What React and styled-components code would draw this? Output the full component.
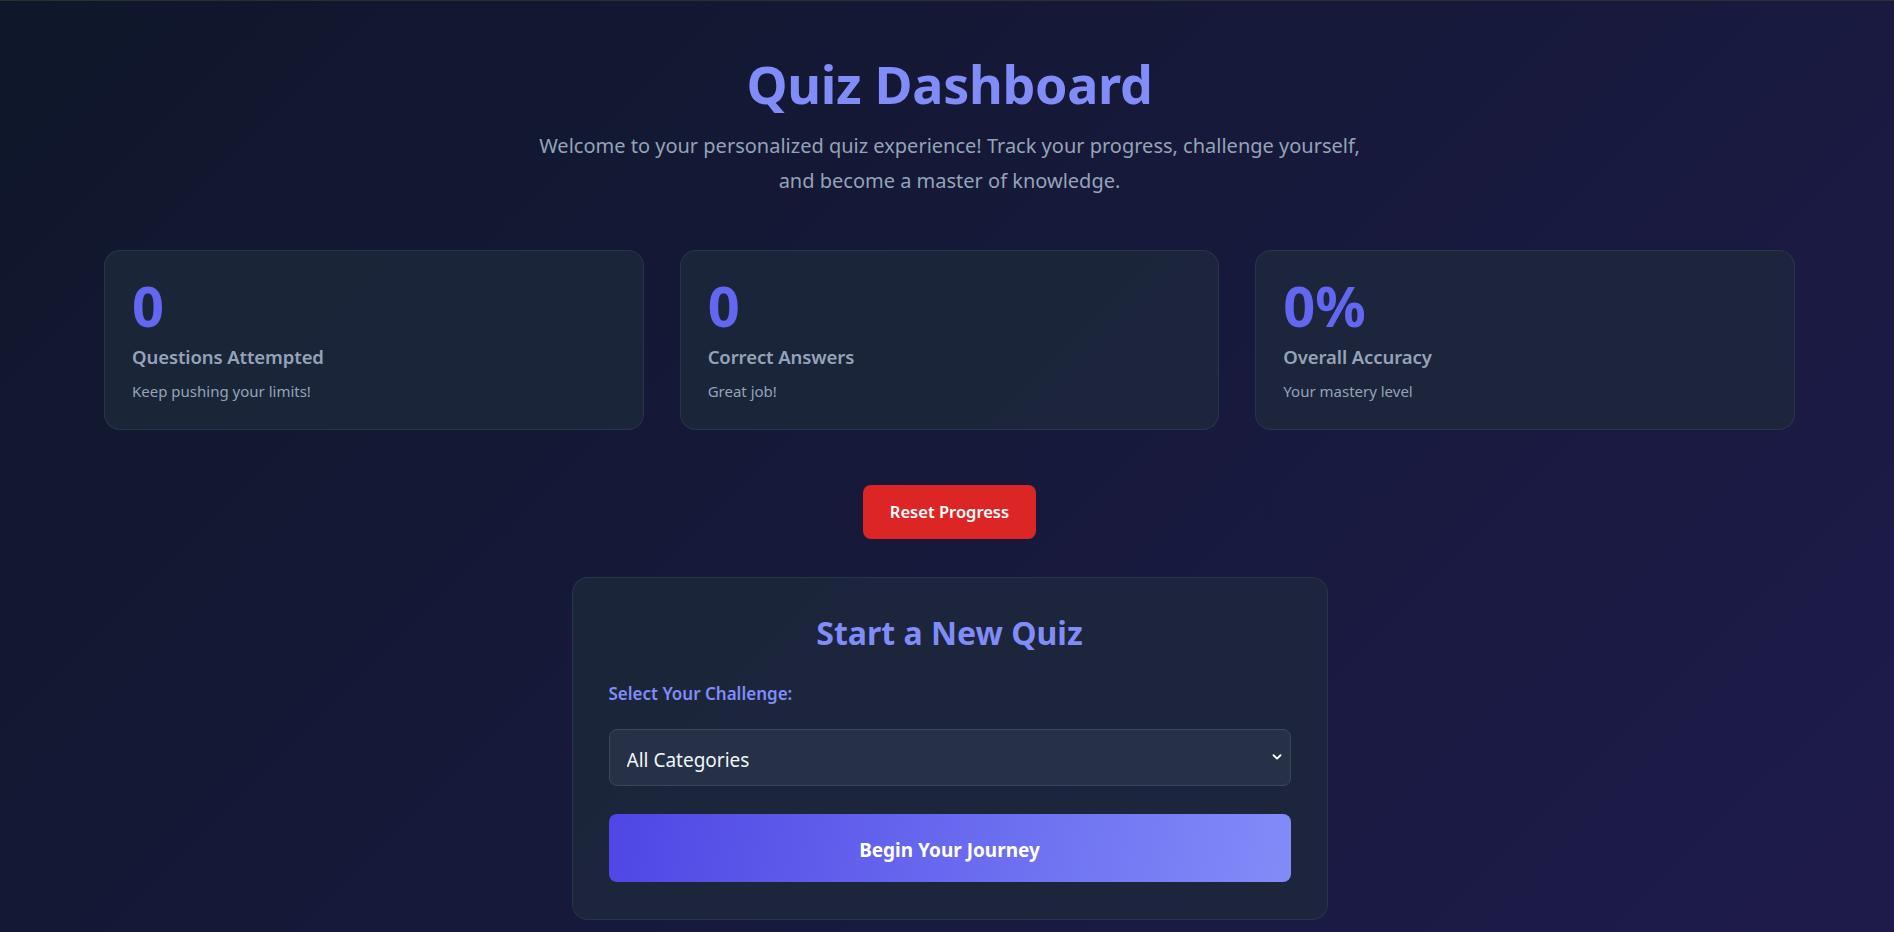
import React from 'react';
import styled, { createGlobalStyle } from 'styled-components';

const GlobalStyle = createGlobalStyle`
  * { box-sizing: border-box; }
  html, body { margin: 0; padding: 0; }
  body {
    font-family: "Noto Sans", "Open Sans", sans-serif;
    background: #0f172a;
  }
`;

const Page = styled.div`
  min-height: 100vh;
  border-top: 1px solid #2e2e2e;
  background: linear-gradient(135deg, #0f172a 0%, #1e1b4b 100%);
  padding: 52px 0 10px 5px;
  display: flex;
  flex-direction: column;
  align-items: center;
`;

const Title = styled.h1`
  margin: 0;
  font-size: 52px;
  font-weight: 700;
  line-height: 1.2;
  letter-spacing: -0.3px;
  color: #818cf8;
  text-align: center;
`;

const Subtitle = styled.p`
  margin: 13px 0 0;
  max-width: 840px;
  font-size: 20px;
  line-height: 35px;
  color: #94a3b8;
  text-align: center;
`;

const StatGrid = styled.div`
  margin-top: 52px;
  width: 100%;
  max-width: 1691px;
  display: grid;
  grid-template-columns: repeat(3, 1fr);
  gap: 36px;
`;

const StatCard = styled.div`
  padding: 26px 27px;
  border-radius: 16px;
  background: rgba(30, 41, 59, 0.78);
  border: 1px solid rgba(51, 65, 85, 0.55);
`;

const StatValue = styled.div`
  font-size: 56px;
  font-weight: 700;
  line-height: 56px;
  color: #6366f1;
`;

const StatLabel = styled.div`
  margin-top: 10px;
  font-size: 18.5px;
  font-weight: 600;
  line-height: 28px;
  letter-spacing: -0.1px;
  color: #94a3b8;
`;

const StatNote = styled.div`
  margin-top: 9px;
  font-size: 15px;
  line-height: 22.5px;
  color: #94a3b8;
`;

const ResetButton = styled.button`
  margin-top: 55px;
  height: 54px;
  width: 173px;
  padding: 0;
  border: none;
  border-radius: 8px;
  background: #dc2626;
  color: #ffffff;
  font-family: inherit;
  font-size: 16.5px;
  font-weight: 600;
  cursor: pointer;
`;

const QuizCard = styled.section`
  margin-top: 38px;
  width: 756px;
  padding: 37px 36px 37px;
  border-radius: 16px;
  background: rgba(30, 41, 59, 0.78);
  border: 1px solid rgba(51, 65, 85, 0.55);
  display: flex;
  flex-direction: column;
`;

const QuizTitle = styled.h2`
  margin: 0;
  font-size: 32px;
  font-weight: 700;
  line-height: 36px;
  color: #818cf8;
  text-align: center;
`;

const FieldLabel = styled.label`
  margin-top: 31px;
  font-size: 17px;
  font-weight: 600;
  line-height: 24px;
  color: #818cf8;
`;

const SelectWrap = styled.div`
  position: relative;
  margin-top: 23px;
`;

const Select = styled.select`
  appearance: none;
  -webkit-appearance: none;
  width: 100%;
  height: 57px;
  padding: 5px 40px 0 17px;
  border-radius: 8px;
  border: 1px solid #3b475b;
  background: #263148;
  color: #f1f5f9;
  font-family: inherit;
  font-size: 19px;
  outline: none;
`;

const Chevron = styled.svg`
  position: absolute;
  right: 9px;
  top: 50%;
  transform: translateY(-50%);
  pointer-events: none;
`;

const StartButton = styled.button`
  margin-top: 28px;
  height: 68px;
  width: 100%;
  padding: 4px 0 0;
  border: none;
  border-radius: 8px;
  background: linear-gradient(100deg, #4f46e5 0%, #818cf8 100%);
  color: #ffffff;
  font-family: inherit;
  font-size: 19px;
  font-weight: 700;
  cursor: pointer;
`;

const stats = [
  { value: '0', label: 'Questions Attempted', note: 'Keep pushing your limits!' },
  { value: '0', label: 'Correct Answers', note: 'Great job!' },
  { value: '0%', label: 'Overall Accuracy', note: 'Your mastery level' },
];

export default function App() {
  return (
    <>
      <GlobalStyle />
      <Page>
        <Title>Quiz Dashboard</Title>
        <Subtitle>
          Welcome to your personalized quiz experience! Track your progress, challenge yourself,
          and become a master of knowledge.
        </Subtitle>
        <StatGrid>
          {stats.map((s) => (
            <StatCard key={s.label}>
              <StatValue>{s.value}</StatValue>
              <StatLabel>{s.label}</StatLabel>
              <StatNote>{s.note}</StatNote>
            </StatCard>
          ))}
        </StatGrid>
        <ResetButton>Reset Progress</ResetButton>
        <QuizCard>
          <QuizTitle>Start a New Quiz</QuizTitle>
          <FieldLabel htmlFor="cat">Select Your Challenge:</FieldLabel>
          <SelectWrap>
            <Select id="cat" defaultValue="all">
              <option value="all">All Categories</option>
              <option value="science">Science</option>
              <option value="history">History</option>
            </Select>
            <Chevron width="10" height="8" viewBox="0 0 10 8">
              <path d="M1.5 2.2 L5 5.6 L8.5 2.2" fill="none" stroke="#ffffff" strokeWidth="1.9" strokeLinecap="round" strokeLinejoin="round" />
            </Chevron>
          </SelectWrap>
          <StartButton>Begin Your Journey</StartButton>
        </QuizCard>
      </Page>
    </>
  );
}
